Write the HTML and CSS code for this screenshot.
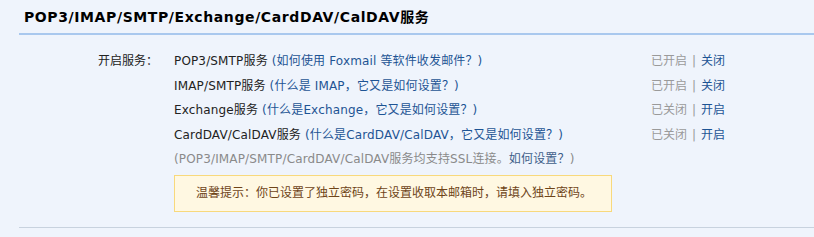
FILE: index.html
```html
<!DOCTYPE html>
<html>
<head>
<meta charset="utf-8">
<link rel="stylesheet" href="styles.css">
</head>
<body>
<div class="panel">
  <h2 class="title">POP3/IMAP/SMTP/Exchange/CardDAV/CalDAV服务</h2>
  <div class="grid">
    <div class="label">开启服务：</div>
    <div class="item">POP3/SMTP服务 <a class="link">(如何使用 Foxmail 等软件收发邮件？)</a></div>
    <div class="status"><span class="muted">已开启</span><span class="sep">|</span><a class="link">关闭</a></div>

    <div class="label"></div>
    <div class="item">IMAP/SMTP服务 <a class="link">(什么是 IMAP，它又是如何设置？)</a></div>
    <div class="status"><span class="muted">已开启</span><span class="sep">|</span><a class="link">关闭</a></div>

    <div class="label"></div>
    <div class="item">Exchange服务 <a class="link">(什么是Exchange，它又是如何设置？)</a></div>
    <div class="status"><span class="muted">已关闭</span><span class="sep">|</span><a class="link">开启</a></div>

    <div class="label"></div>
    <div class="item">CardDAV/CalDAV服务 <a class="link">(什么是CardDAV/CalDAV，它又是如何设置？)</a></div>
    <div class="status"><span class="muted">已关闭</span><span class="sep">|</span><a class="link">开启</a></div>

    <div class="label"></div>
    <div class="item note">(POP3/IMAP/SMTP/CardDAV/CalDAV服务均支持SSL连接。<a class="link">如何设置？</a>)</div>
    <div class="status"></div>

    <div class="label"></div>
    <div class="tipcell"><div class="tip">温馨提示：你已设置了独立密码，在设置收取本邮箱时，请填入独立密码。</div></div>
    <div class="status"></div>
  </div>
  <div class="bottom"></div>
</div>
</body>
</html>
```
FILE: styles.css
```css
html, body {
  margin: 0;
  padding: 0;
  background: #eff4fc;
}
body {
  font-family: "DejaVu Sans", "Noto Sans CJK SC", sans-serif;
  font-size: 12px;
  color: #222;
}
.panel {
  padding-left: 19px;
}
.title {
  margin: 0;
  height: 33px;
  line-height: 34px;
  padding-left: 5px;
  font-size: 14px;
  font-weight: bold;
  color: #000;
  border-bottom: 2px solid #a9c8ee;
  letter-spacing: 0.6px;
}
.grid {
  display: grid;
  grid-template-columns: 76px 477px auto;
  margin-left: 79px;
  padding-top: 14px;
  line-height: 24.5px;
}
.label {
  color: #222;
}
.item {
  white-space: nowrap;
  letter-spacing: 0.15px;
}
.link {
  color: #1e5494;
  text-decoration: none;
}
.note {
  color: #8a8a8a;
}
.note .link {
  color: #3f5f8a;
}
.status {
  white-space: nowrap;
}
.muted {
  color: #9a9a9a;
}
.sep {
  color: #9a9a9a;
  margin: 0 5px;
}
.tipcell {
  padding-top: 3px;
}
.tip {
  box-sizing: border-box;
  width: 438px;
  height: 37px;
  line-height: 35px;
  padding-left: 21px;
  background: #fff8e2;
  border: 1px solid #f8d97c;
  color: #6e4418;
  white-space: nowrap;
}
.bottom {
  margin-top: 15px;
  border-top: 1px solid #c8d2de;
}
```
